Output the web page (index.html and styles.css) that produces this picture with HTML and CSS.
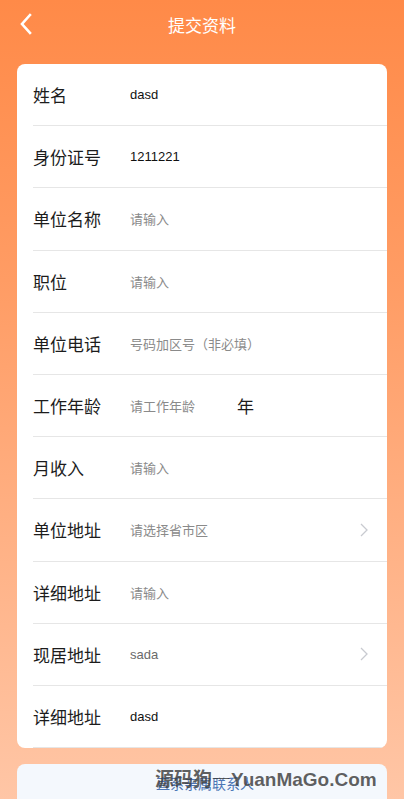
FILE: index.html
```html
<!DOCTYPE html>
<html lang="zh">
<head>
<meta charset="utf-8">
<link rel="stylesheet" href="styles.css">
</head>
<body>
<div class="page">
  <header class="nav">
    <svg class="back" width="14" height="22" viewBox="0 0 14 22"><path d="M11 2 L3 11 L11 20" fill="none" stroke="#fff" stroke-width="2.6" stroke-linecap="square"/></svg>
    <h1 class="title">提交资料</h1>
  </header>
  <section class="card">
    <div class="row"><span class="label">姓名</span><span class="val">dasd</span></div>
    <div class="row"><span class="label">身份证号</span><span class="val">1211221</span></div>
    <div class="row"><span class="label">单位名称</span><span class="val ph">请输入</span></div>
    <div class="row"><span class="label">职位</span><span class="val ph">请输入</span></div>
    <div class="row"><span class="label">单位电话</span><span class="val ph">号码加区号（非必填）</span></div>
    <div class="row"><span class="label">工作年龄</span><span class="val ph age">请工作年龄</span><span class="unit">年</span></div>
    <div class="row"><span class="label">月收入</span><span class="val ph">请输入</span></div>
    <div class="row"><span class="label">单位地址</span><span class="val ph">请选择省市区</span><svg class="arrow" width="10" height="16" viewBox="0 0 10 16"><path d="M2 2 L8 8 L2 14" fill="none" stroke="#c8cad0" stroke-width="1.3"/></svg></div>
    <div class="row"><span class="label">详细地址</span><span class="val ph">请输入</span></div>
    <div class="row"><span class="label">现居地址</span><span class="val dim">sada</span><svg class="arrow" width="10" height="16" viewBox="0 0 10 16"><path d="M2 2 L8 8 L2 14" fill="none" stroke="#c8cad0" stroke-width="1.3"/></svg></div>
    <div class="row"><span class="label">详细地址</span><span class="val">dasd</span></div>
  </section>
  <section class="card2">
    <span class="link">直系亲属联系人</span>
  </section>
  <div class="watermark"><span class="wm-cn">源码狗—</span>YuanMaGo.Com</div>
</div>
</body>
</html>
```
FILE: styles.css
```css
html, body {
  margin: 0;
  padding: 0;
}
body {
  font-family: "Liberation Sans", "Noto Sans CJK SC", sans-serif;
  background: linear-gradient(180deg, #ff8a48 0%, #ff9c64 35%, #ffc6a6 100%);
  height: 799px;
  overflow: hidden;
}
.page {
  position: relative;
  height: 799px;
}
.nav {
  height: 48px;
  display: flex;
  align-items: center;
  justify-content: center;
  position: relative;
}
.back {
  position: absolute;
  left: 19px;
  top: 13px;
}
.title {
  margin: 0;
  font-family: "Noto Sans CJK SC", sans-serif;
  font-weight: 400;
  font-size: 17px;
  color: #fff;
}
.card {
  margin: 16px 17px 0;
  background: #fff;
  border-radius: 8px;
  overflow: hidden;
}
.row {
  height: 61.2px;
  margin-left: 16px;
  border-bottom: 1px solid #e6e6e6;
  display: flex;
  align-items: center;
  padding-right: 18px;
}
.label {
  width: 97px;
  font-family: "Noto Sans CJK SC", sans-serif;
  font-size: 17px;
  color: #1c1c1c;
}
.val {
  flex: 1;
  font-size: 13px;
  color: #111;
}
.val.ph {
  font-family: "Noto Sans CJK SC", sans-serif;
  color: #8a8a8a;
}
.val.dim {
  color: #6a6a6a;
}
.val.age {
  flex: 0 0 107px;
}
.unit {
  flex: 1;
  font-family: "Noto Sans CJK SC", sans-serif;
  font-size: 17px;
  color: #1c1c1c;
}
.arrow {
  display: block;
}
.card2 {
  margin: 16px 17px 0;
  height: 60px;
  background: #f4f8fd;
  border-radius: 8px;
  display: flex;
  justify-content: center;
  padding-top: 9px;
  box-sizing: border-box;
}
.link {
  font-family: "Noto Sans CJK SC", sans-serif;
  font-size: 14px;
  color: #4d76b6;
  margin-left: 6px;
}
.watermark {
  position: absolute;
  left: 155px;
  top: 766px;
  font-family: "Liberation Sans", "Noto Sans CJK SC", sans-serif;
  font-weight: 700;
  font-size: 19px;
  line-height: 24px;
  color: rgba(60, 60, 60, 0.82);
  white-space: nowrap;
}
.wm-cn {
  font-family: "Noto Sans CJK SC", sans-serif;
  font-weight: 700;
}
```
